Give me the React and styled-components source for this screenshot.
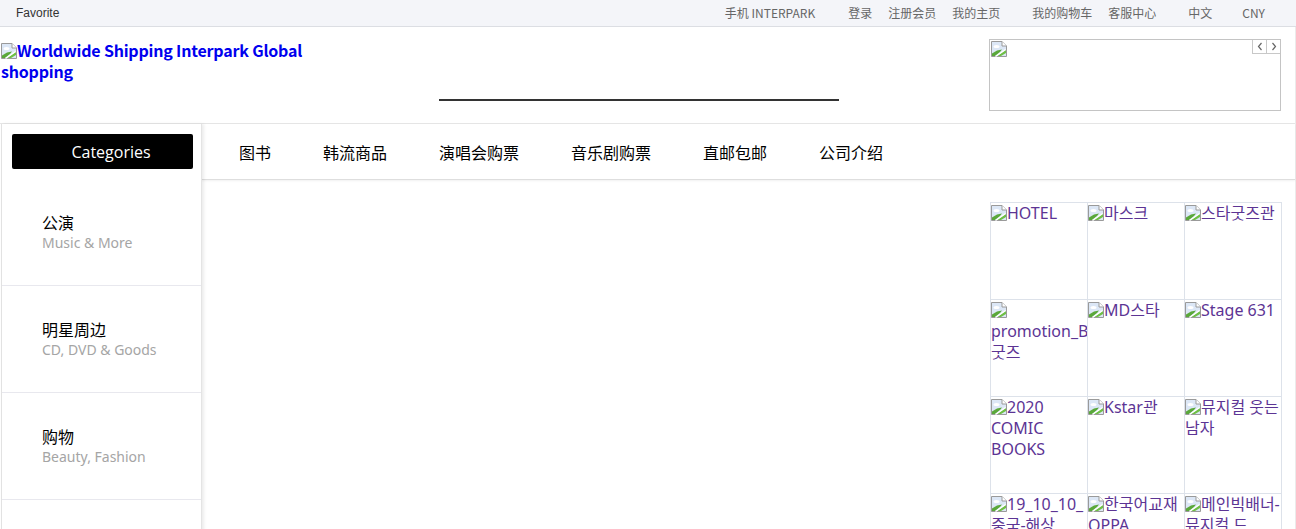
import React from 'react';
import styled, { createGlobalStyle } from 'styled-components';

const GlobalStyle = createGlobalStyle`
    body {
        margin: 0;
        background: #fff;
        font-family: "Noto Sans CJK SC", "Noto Sans", sans-serif;
        overflow: hidden;
    }
`;

const topLinks = [
    { label: '手机 INTERPARK', gap: 0 },
    { label: '登录', gap: 17 },
    { label: '注册会员', gap: 0 },
    { label: '我的主页', gap: 0 },
    { label: '我的购物车', gap: 16 },
    { label: '客服中心', gap: 0 },
    { label: '中文', gap: 16 },
    { label: 'CNY', gap: 14 }
];

const navItems = ['图书', '韩流商品', '演唱会购票', '音乐剧购票', '直邮包邮', '公司介绍'];

const categories = [
    { title: '公演', sub: 'Music & More' },
    { title: '明星周边', sub: 'CD, DVD & Goods' },
    { title: '购物', sub: 'Beauty, Fashion' },
    { title: '', sub: '' }
];

const tiles = [
    'HOTEL',
    '마스크',
    '스타굿즈관',
    'promotion_BTS굿즈',
    'MD스타',
    'Stage 631',
    '2020 COMIC BOOKS',
    'Kstar관',
    '뮤지컬 웃는 남자',
    '19_10_10_중국-해상',
    '한국어교재 OPPA',
    '메인빅배너-뮤지컬 드'
];

const BrokenImage = () => (
    <BrokenSvg width="16" height="16" viewBox="0 0 16 16">
        <path d="M0.5 0.5H11L15.5 5V15.5H0.5Z" fill="#dce7f6" stroke="#9a9a9a" />
        <path d="M11 0.5V5H15.5" fill="#fff" stroke="#9a9a9a" />
        <ellipse cx="5.5" cy="5.5" rx="3" ry="1.6" fill="#fff" />
        <path d="M1 15V12.5L6 9.5L11 8.5L9 11L4 15Z" fill="#5aa83a" />
        <path d="M6 15L15 9V12L10 15Z" fill="#6fbf45" />
        <path d="M4.5 15.5L14.5 8.5" stroke="#fff" strokeWidth="1.3" />
    </BrokenSvg>
);

const Chevron = ({ dir }) => (
    <svg width="6" height="9" viewBox="0 0 6 9">
        <path
            d={dir === 'left' ? 'M4.5 1L1.5 4.5L4.5 8' : 'M1.5 1L4.5 4.5L1.5 8'}
            fill="none"
            stroke="#666"
            strokeWidth="1.2"
        />
    </svg>
);

function App() {
    return (
        <>
            <GlobalStyle />
            <TopBar>
                <Favorite>Favorite</Favorite>
                <TopLinks>
                    {topLinks.map(link => (
                        <TopLink key={link.label} $gap={link.gap}>
                            {link.label}
                        </TopLink>
                    ))}
                </TopLinks>
            </TopBar>
            <Page>
                <Header>
                    <Logo>
                        <BrokenImage />
                        Worldwide Shipping Interpark Global shopping
                    </Logo>
                    <SearchInput type="text" />
                    <Banner>
                        <BrokenImage />
                        <BannerArrows>
                            <ArrowButton><Chevron dir="left" /></ArrowButton>
                            <ArrowButton><Chevron dir="right" /></ArrowButton>
                        </BannerArrows>
                    </Banner>
                </Header>
                <Main>
                    <Sidebar>
                        <CategoryHead>
                            <CategoryButton>Categories</CategoryButton>
                        </CategoryHead>
                        {categories.map((c, i) => (
                            <CategoryItem key={i}>
                                <CategoryTitle>{c.title}</CategoryTitle>
                                <CategorySub>{c.sub}</CategorySub>
                            </CategoryItem>
                        ))}
                    </Sidebar>
                    <Content>
                        <Nav>
                            {navItems.map(item => (
                                <NavItem key={item}>{item}</NavItem>
                            ))}
                        </Nav>
                        <Body>
                            <TileGrid>
                                {tiles.map(t => (
                                    <Tile key={t}>
                                        <BrokenImage />
                                        {t}
                                    </Tile>
                                ))}
                            </TileGrid>
                        </Body>
                    </Content>
                </Main>
            </Page>
        </>
    );
}

const BrokenSvg = styled.svg`
    display: inline-block;
    vertical-align: -2px;
    flex-shrink: 0;
`;

const TopBar = styled.div`
    display: flex;
    align-items: center;
    justify-content: space-between;
    height: 26px;
    background: #f4f5f9;
    border-bottom: 1px solid #dcdee3;
    font-size: 12px;
    line-height: 22px;
`;

const Favorite = styled.span`
    padding-left: 16px;
    color: #333;
    font-family: "Liberation Sans", Arial, sans-serif;
`;

const TopLinks = styled.div`
    display: flex;
    padding-right: 23px;
`;

const TopLink = styled.span`
    padding: 0 8px;
    margin-left: ${props => props.$gap}px;
    color: #666;
`;

const Page = styled.div`
    width: 1295px;
    border-right: 1px solid #ebebeb;
`;

const Header = styled.div`
    display: flex;
    height: 96px;
    border-bottom: 1px solid #e6e6e6;
`;

const Logo = styled.div`
    width: 330px;
    margin: 13px 0 0 1px;
    font-size: 16px;
    font-weight: 700;
    line-height: 21px;
    letter-spacing: -0.2px;
    color: #0000ee;
`;

const SearchInput = styled.input`
    width: 400px;
    height: 28px;
    margin: 44px 0 0 108px;
    padding: 0;
    border: 0;
    border-bottom: 2px solid #333;
    outline: none;
    background: transparent;
`;

const Banner = styled.div`
    position: relative;
    width: 288px;
    height: 68px;
    margin: 12px 0 0 150px;
    padding: 1px;
    box-sizing: content-box;
    border: 1px solid #c4c4c4;
    line-height: 0;
`;

const BannerArrows = styled.div`
    position: absolute;
    top: 0;
    right: 0;
    display: flex;
`;

const ArrowButton = styled.span`
    display: flex;
    align-items: center;
    justify-content: center;
    width: 13px;
    height: 13px;
    border-left: 1px solid #c8c8c8;
    border-bottom: 1px solid #c8c8c8;
`;

const Main = styled.div`
    display: flex;
    align-items: flex-start;
`;

const Sidebar = styled.div`
    position: relative;
    z-index: 1;
    width: 199px;
    margin-left: 1px;
    border-left: 1px solid #e2e2e2;
    border-right: 1px solid #e4e4e4;
    box-shadow: 2px 0 3px rgba(0, 0, 0, 0.08);
    background: #fff;
`;

const CategoryHead = styled.div`
    height: 55px;
    padding: 10px 0 0 10px;
    box-sizing: border-box;
`;

const CategoryButton = styled.div`
    width: 181px;
    height: 35px;
    padding-left: 17px;
    box-sizing: border-box;
    border-radius: 2px;
    background: #000;
    color: #fff;
    font-family: "Open Sans", sans-serif;
    font-size: 16px;
    line-height: 36px;
    text-align: center;
`;

const CategoryItem = styled.div`
    display: flex;
    flex-direction: column;
    justify-content: center;
    height: 106px;
    padding-left: 40px;
    border-bottom: 1px solid #e8e8ee;
`;

const CategoryTitle = styled.span`
    font-size: 16px;
    line-height: 22px;
    color: #000;
`;

const CategorySub = styled.span`
    font-family: "Noto Sans", "Noto Sans CJK SC", sans-serif;
    font-size: 14px;
    line-height: 20px;
    color: #a5a5a5;
`;

const Content = styled.div`
    flex: 1;
`;

const Nav = styled.div`
    display: flex;
    align-items: center;
    height: 55px;
    padding-left: 11px;
    border-bottom: 1px solid #dedede;
    box-shadow: 0 1px 2px rgba(0, 0, 0, 0.06);
`;

const NavItem = styled.span`
    padding: 0 26px;
    font-size: 16px;
    color: #000;
`;

const Body = styled.div`
    display: flex;
    justify-content: flex-end;
    padding: 22px 13px 0 0;
`;

const TileGrid = styled.div`
    display: grid;
    grid-template-columns: repeat(3, 97px);
    grid-auto-rows: 97px;
    border-top: 1px solid #dde2ea;
    border-left: 1px solid #dde2ea;
`;

const Tile = styled.div`
    overflow: hidden;
    border-right: 1px solid #dde2ea;
    border-bottom: 1px solid #dde2ea;
    font-family: "Noto Sans", "Noto Sans CJK KR", sans-serif;
    font-size: 16px;
    line-height: 21px;
    color: #5c3494;
`;

export default App;
